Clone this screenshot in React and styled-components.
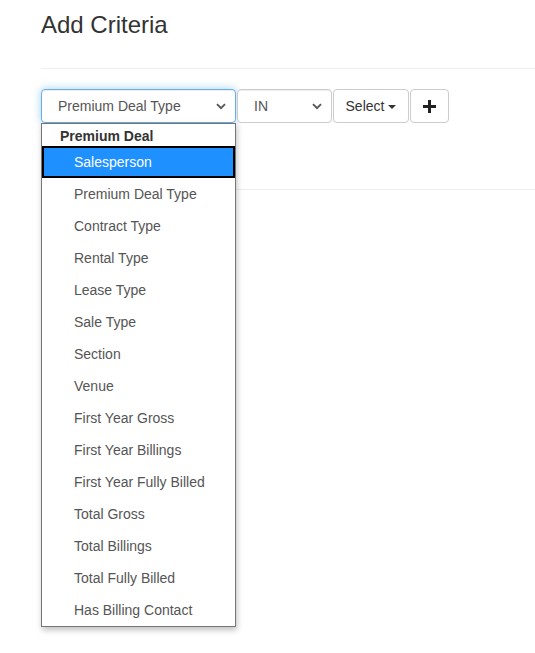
import React from 'react';
import styled, {createGlobalStyle} from 'styled-components';

const GlobalStyle = createGlobalStyle`
  html, body {
    margin: 0;
    padding: 0;
    background: #fff;
  }
  body {
    font-family: "Liberation Sans", Arial, sans-serif;
    font-size: 14px;
    color: #333;
  }
`;

const Page = styled.div`
  padding: 0 0 0 41px;
  width: 494px;
  min-height: 653px;
`;

const Title = styled.h3`
  margin: 10px 0 0;
  font-size: 24px;
  font-weight: 400;
  line-height: 30px;
  color: #333;
`;

const Rule = styled.hr`
  margin: ${p => p.$top}px 0 0;
  border: 0;
  border-top: 1px solid #eee;
  height: 0;
`;

const Row = styled.div`
  display: flex;
  gap: 1px;
  margin-top: 20px;
  position: relative;
  z-index: 2;
`;

const SelectBox = styled.div`
  box-sizing: border-box;
  width: ${p => p.$width}px;
  height: 34px;
  display: flex;
  align-items: center;
  justify-content: space-between;
  padding: 0 9px 0 ${p => p.$pad}px;
  border: 1px solid ${p => (p.$focus ? '#66afe9' : '#ccc')};
  border-radius: 4px;
  box-shadow: ${p =>
    p.$focus
      ? 'inset 0 1px 1px rgba(0,0,0,.075), 0 0 8px rgba(102,175,233,.6)'
      : 'inset 0 1px 1px rgba(0,0,0,.075)'};
  color: #555;
  background: #fff;
`;

const Button = styled.div`
  box-sizing: border-box;
  width: ${p => p.$width}px;
  height: 34px;
  display: flex;
  align-items: center;
  justify-content: center;
  gap: 4px;
  border: 1px solid #ccc;
  border-radius: 4px;
  color: #333;
  background: #fff;
`;

const Caret = styled.span`
  width: 0;
  height: 0;
  border-top: 4px solid #333;
  border-left: 4px solid transparent;
  border-right: 4px solid transparent;
  margin-top: 2px;
`;

const Listbox = styled.div`
  position: absolute;
  left: 0;
  top: 34px;
  width: 195px;
  box-sizing: border-box;
  border: 1px solid #767676;
  background: #fff;
  box-shadow: 1px 3px 6px rgba(0, 0, 0, 0.25);
`;

const GroupLabel = styled.div`
  height: 22px;
  line-height: 24px;
  padding-left: 18px;
  font-weight: 700;
  color: #333;
`;

const Option = styled.div`
  box-sizing: border-box;
  height: 32px;
  line-height: ${p => (p.$active ? 28 : 32)}px;
  padding-left: ${p => (p.$active ? 30 : 32)}px;
  color: ${p => (p.$active ? '#fff' : '#555')};
  background: ${p => (p.$active ? '#1e90ff' : '#fff')};
  border: ${p => (p.$active ? '2px solid #000' : '0')};
  white-space: nowrap;
`;

const Chevron = () => (
  <svg width="10" height="7" viewBox="0 0 10 7">
    <path d="M1 1.2 L5 5.2 L9 1.2" fill="none" stroke="#555" strokeWidth="1.8" />
  </svg>
);

const Plus = () => (
  <svg width="13" height="13" viewBox="0 0 13 13">
    <path d="M5 0h3v5h5v3H8v5H5V8H0V5h5z" fill="#222" />
  </svg>
);

const options = [
  'Salesperson',
  'Premium Deal Type',
  'Contract Type',
  'Rental Type',
  'Lease Type',
  'Sale Type',
  'Section',
  'Venue',
  'First Year Gross',
  'First Year Billings',
  'First Year Fully Billed',
  'Total Gross',
  'Total Billings',
  'Total Fully Billed',
  'Has Billing Contact',
];

export default function App() {
  return (
    <Page>
      <GlobalStyle />
      <Title>Add Criteria</Title>
      <Rule $top={28} />
      <Row>
        <SelectBox $width={195} $pad={16} $focus>
          <span>Premium Deal Type</span>
          <Chevron />
        </SelectBox>
        <SelectBox $width={95} $pad={16}>
          <span>IN</span>
          <Chevron />
        </SelectBox>
        <Button $width={76}>
          Select <Caret />
        </Button>
        <Button $width={39}>
          <Plus />
        </Button>
        <Listbox>
          <GroupLabel>Premium Deal</GroupLabel>
          {options.map((o, i) => (
            <Option key={o} $active={i === 0}>
              {o}
            </Option>
          ))}
        </Listbox>
      </Row>
      <Rule $top={66} />
    </Page>
  );
}
